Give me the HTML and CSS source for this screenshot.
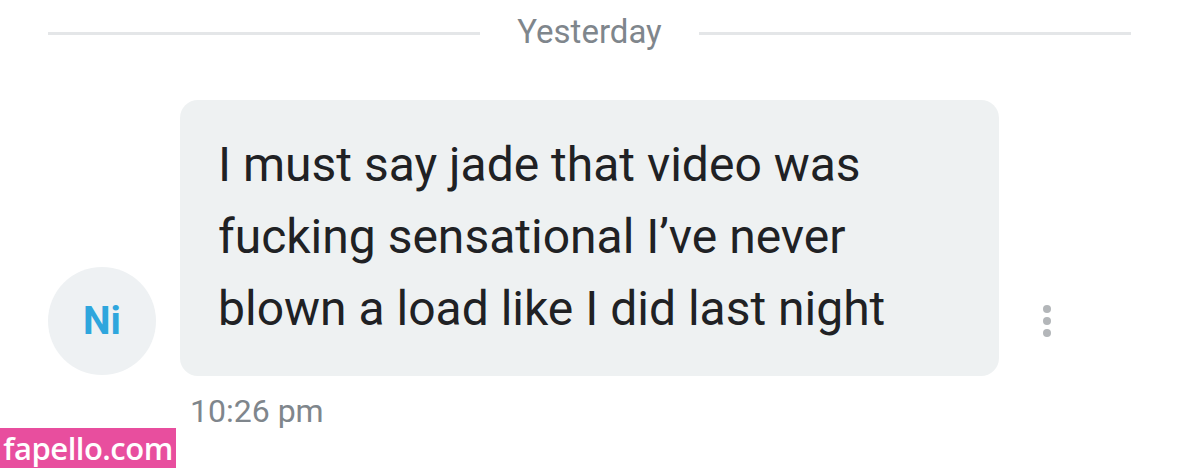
FILE: index.html
```html
<!DOCTYPE html>
<html>
<head>
<meta charset="utf-8">
<link rel="stylesheet" href="styles.css">
</head>
<body>
<div class="page">
  <div class="divider">
    <span class="line"></span>
    <span class="label">Yesterday</span>
    <span class="line"></span>
  </div>
  <div class="row">
    <div class="avatar">Ni</div>
    <div class="bubble">I must say jade that video was<br>fucking sensational I’ve never<br>blown a load like I did last night</div>
    <div class="more">
      <span class="dot"></span><span class="dot"></span><span class="dot"></span>
    </div>
  </div>
  <div class="time">10:26 pm</div>
</div>
<div class="watermark">fapello.com</div>
</body>
</html>
```

FILE: styles.css
```css
html, body {
  margin: 0;
  padding: 0;
  background: #ffffff;
  width: 1179px;
  height: 468px;
  overflow: hidden;
  font-family: Roboto, "Liberation Sans", sans-serif;
}
.page {
  padding: 0 48px;
}
.divider {
  display: flex;
  align-items: center;
  gap: 37px;
  height: 64px;
}
.line {
  flex: 1;
  height: 3px;
  background: #e4e6e8;
  margin-top: 2px;
}
.label {
  font-size: 33px;
  color: #7f868c;
  line-height: 64px;
}
.row {
  display: flex;
  align-items: flex-end;
  margin-top: 36px;
}
.avatar {
  width: 108px;
  height: 108px;
  border-radius: 50%;
  background: #eef1f3;
  color: #2ea6dd;
  font-weight: 700;
  font-size: 39px;
  display: flex;
  align-items: center;
  justify-content: center;
  margin-bottom: 1px;
  flex: none;
}
.bubble {
  margin-left: 24px;
  width: 781px;
  background: #eef1f2;
  border-radius: 18px;
  padding: 29px 0 31px 38px;
  font-size: 48px;
  line-height: 72px;
  color: #202124;
  white-space: nowrap;
}
.more {
  height: 108px;
  width: 96px;
  display: flex;
  flex-direction: column;
  align-items: center;
  justify-content: center;
  gap: 4px;
  margin-bottom: 1px;
}
.dot {
  width: 8px;
  height: 8px;
  border-radius: 50%;
  background: #b3b6b9;
}
.time {
  margin-left: 142px;
  margin-top: 16px;
  font-size: 32px;
  color: #7f868c;
}
.watermark {
  position: absolute;
  left: 0;
  bottom: 0;
  width: 176px;
  height: 40px;
  background: #e84e9e;
  color: #ffffff;
  font-family: "Open Sans", sans-serif;
  font-weight: 600;
  font-size: 31px;
  line-height: 40px;
  text-align: center;
  letter-spacing: -0.5px;
}
```
